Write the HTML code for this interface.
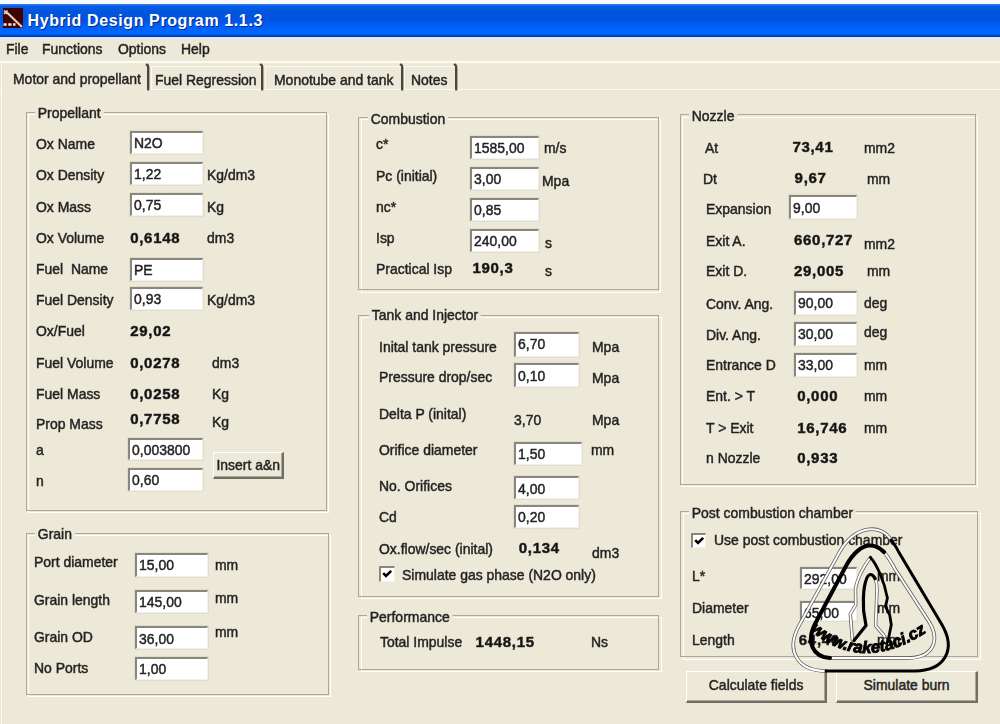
<!DOCTYPE html>
<html><head><meta charset="utf-8"><title>Hybrid Design Program</title><style>
*{margin:0;padding:0;box-sizing:border-box}
html,body{width:1000px;height:724px;overflow:hidden;background:#ECE9D8}
body{position:relative;font-family:"Liberation Sans",sans-serif;color:#1c1c1c}
#w{position:absolute;left:0;top:0;width:1000px;height:724px;filter:blur(0.5px);-webkit-text-stroke:0.5px #2a2a2a}
.t,.b{position:absolute;white-space:nowrap;font-size:15px;line-height:16px;transform-origin:0 0}
.t{transform:scaleX(.93)}
.b{font-weight:bold;font-size:15px;letter-spacing:0.7px;color:#111}
.gt{background:#ECE9D8;padding:0 3px 0 3px}
.gd,.gw{position:absolute}
.gd{border:1.4px solid #ACA899}
.gw{border:1.4px solid #FFFFFF}
.in{position:absolute;background:#fff;border-top:2px solid #8a877a;border-left:2px solid #8a877a;border-right:1.5px solid #f4f2e8;border-bottom:1.5px solid #f4f2e8;box-shadow:0 0 0 0.6px #d8d5c8}
.in span{position:absolute;left:2px;top:2.2px;font-size:15px;line-height:16px;white-space:nowrap;transform-origin:0 0;transform:scaleX(.93)}
.btn{position:absolute;background:#ECE9D8;border-top:1.5px solid #fff;border-left:1.5px solid #fff;border-right:2px solid #716F64;border-bottom:2px solid #716F64;box-shadow:inset -1px -1px 0 #ACA899}
.btn span{position:absolute;left:0;right:0;text-align:center;font-size:15px;line-height:16px;white-space:nowrap;transform:scaleX(.93)}
.cb{position:absolute;background:#fff;border-top:2px solid #8a877a;border-left:2px solid #8a877a;border-right:1.5px solid #f4f2e8;border-bottom:1.5px solid #f4f2e8}
.cb svg{position:absolute;left:-2px;top:-2px;width:15px;height:15px}
.abs{position:absolute}
</style></head><body><div id="w">
<div class="abs" style="left:0;top:0;width:1000px;height:3.5px;background:#F6FAFF"></div>
<div class="abs" style="left:0;top:3.5px;width:1000px;height:33px;background:linear-gradient(to bottom,#3C82F0 0px,#0A5EE6 2px,#0055DE 8px,#0052E2 16px,#0060F8 22px,#0068FF 30px,#0048C8 31.5px,#0034A8 33px)"></div>
<div class="abs" style="left:0;top:36.5px;width:1000px;height:2.2px;background:#E2E8F6"></div>
<div class="abs" style="left:2.5px;top:8.3px;width:20.5px;height:20px;background:#3E0404"></div>
<svg class="abs" style="left:2px;top:8px" width="22" height="21" viewBox="0 0 22 21"><path d="M5 4.5 L20 19" stroke="#F0C8B8" stroke-width="2.2"/><path d="M2 2.5 L5.5 6 M2 6 L5.5 2.5" stroke="#e0e0e0" stroke-width="1.6"/><path d="M1.5 16.5 h3.2 M6.3 16.5 h3.2 M11 16.5 h2.5" stroke="#e8e8e8" stroke-width="2.6"/></svg>
<div class="abs" style="left:27.5px;top:10.5px;font-size:16px;line-height:20px;font-weight:bold;color:#fff;white-space:nowrap;-webkit-text-stroke:0;text-shadow:1px 1px 0 #0A2A8A;letter-spacing:0.62px">Hybrid Design Program 1.1.3</div>
<div class="t" style="left:6.4px;top:41.3px">File</div>
<div class="t" style="left:42.4px;top:41.3px">Functions</div>
<div class="t" style="left:118.0px;top:41.3px">Options</div>
<div class="t" style="left:181.2px;top:41.3px">Help</div>
<div class="abs" style="left:0;top:61px;width:1000px;height:2px;background:#FBFAF3"></div>
<div class="abs" style="left:0;top:88.8px;width:1000px;height:1.5px;background:#FBFAF3"></div>
<div class="abs" style="left:0.6px;top:63px;width:1.5px;height:661px;background:#FBFAF3"></div>
<div class="abs" style="left:0.6px;top:63px;width:147px;height:27px;background:#ECE9D8;border-left:1.5px solid #FBFAF3"></div>
<div class="t" style="left:13.4px;top:70.9px">Motor and propellant</div>
<svg class="abs" style="left:145.4px;top:62px" width="7" height="30" viewBox="0 0 7 30"><path d="M1.8 2.7 C2.8 3.1 3.2 4 3.2 6 V27.4" fill="none" stroke="#4a483e" stroke-width="2.4" stroke-linecap="round"/></svg>
<svg class="abs" style="left:259.4px;top:62px" width="7" height="30" viewBox="0 0 7 30"><path d="M1.8 2.7 C2.8 3.1 3.2 4 3.2 6 V27.4" fill="none" stroke="#4a483e" stroke-width="2.4" stroke-linecap="round"/></svg>
<svg class="abs" style="left:398.6px;top:62px" width="7" height="30" viewBox="0 0 7 30"><path d="M1.8 2.7 C2.8 3.1 3.2 4 3.2 6 V27.4" fill="none" stroke="#4a483e" stroke-width="2.4" stroke-linecap="round"/></svg>
<svg class="abs" style="left:453.2px;top:62px" width="7" height="30" viewBox="0 0 7 30"><path d="M1.8 2.7 C2.8 3.1 3.2 4 3.2 6 V27.4" fill="none" stroke="#4a483e" stroke-width="2.4" stroke-linecap="round"/></svg>
<div class="abs" style="left:150.8px;top:65.5px;width:110.6px;height:23.5px;border-top:1.4px solid #FAF8EF;border-left:1.4px solid #FAF8EF"></div>
<div class="abs" style="left:265.2px;top:65.5px;width:135.4px;height:23.5px;border-top:1.4px solid #FAF8EF;border-left:1.4px solid #FAF8EF"></div>
<div class="abs" style="left:404.0px;top:65.5px;width:51.2px;height:23.5px;border-top:1.4px solid #FAF8EF;border-left:1.4px solid #FAF8EF"></div>
<div class="t" style="left:155.2px;top:72.0px">Fuel Regression</div>
<div class="t" style="left:274.2px;top:72.0px">Monotube and tank</div>
<div class="t" style="left:411.2px;top:72.0px">Notes</div>
<div class="gw" style="left:28.0px;top:114.0px;width:301.3px;height:399.1px"></div>
<div class="gd" style="left:25.8px;top:111.8px;width:301.3px;height:399.1px"></div>
<div class="t gt" style="left:35.0px;top:105.3px">Propellant</div>
<div class="t" style="left:36.0px;top:136.3px">Ox Name</div>
<div class="t" style="left:36.0px;top:167.3px">Ox Density</div>
<div class="t" style="left:36.0px;top:198.8px">Ox Mass</div>
<div class="t" style="left:36.0px;top:229.8px">Ox Volume</div>
<div class="t" style="left:36.0px;top:260.8px">Fuel&nbsp; Name</div>
<div class="t" style="left:36.0px;top:291.8px">Fuel Density</div>
<div class="t" style="left:36.0px;top:322.8px">Ox/Fuel</div>
<div class="t" style="left:36.0px;top:354.8px">Fuel Volume</div>
<div class="t" style="left:36.0px;top:385.6px">Fuel Mass</div>
<div class="t" style="left:36.0px;top:416.4px">Prop Mass</div>
<div class="t" style="left:36.0px;top:441.6px">a</div>
<div class="t" style="left:36.0px;top:472.8px">n</div>
<div class="in" style="left:130.0px;top:131.0px;width:72.5px;height:22.5px"><span>N2O</span></div>
<div class="in" style="left:130.0px;top:162.0px;width:72.5px;height:23.0px"><span>1,22</span></div>
<div class="in" style="left:130.0px;top:193.2px;width:72.5px;height:23.3px"><span>0,75</span></div>
<div class="in" style="left:130.0px;top:258.0px;width:72.5px;height:22.5px"><span>PE</span></div>
<div class="in" style="left:130.0px;top:287.0px;width:72.5px;height:22.5px"><span>0,93</span></div>
<div class="in" style="left:128.0px;top:437.5px;width:74.5px;height:22.0px"><span>0,003800</span></div>
<div class="in" style="left:128.0px;top:468.0px;width:74.5px;height:22.6px"><span>0,60</span></div>
<div class="b" style="left:130.2px;top:229.8px">0,6148</div>
<div class="b" style="left:130.2px;top:322.8px">29,02</div>
<div class="b" style="left:130.2px;top:354.8px">0,0278</div>
<div class="b" style="left:130.2px;top:385.6px">0,0258</div>
<div class="b" style="left:130.2px;top:410.8px">0,7758</div>
<div class="t" style="left:206.9px;top:167.3px">Kg/dm3</div>
<div class="t" style="left:206.9px;top:198.8px">Kg</div>
<div class="t" style="left:206.9px;top:229.8px">dm3</div>
<div class="t" style="left:206.9px;top:291.8px">Kg/dm3</div>
<div class="t" style="left:212.4px;top:354.8px">dm3</div>
<div class="t" style="left:212.4px;top:385.6px">Kg</div>
<div class="t" style="left:212.4px;top:413.6px">Kg</div>
<div class="btn" style="left:213.2px;top:452.2px;width:71.3px;height:27.3px"><span style="top:3.6px">Insert a&amp;n</span></div>
<div class="gw" style="left:28.2px;top:534.7px;width:303.1px;height:162.8px"></div>
<div class="gd" style="left:26.0px;top:532.5px;width:303.1px;height:162.8px"></div>
<div class="t gt" style="left:35.2px;top:525.8px">Grain</div>
<div class="t" style="left:33.8px;top:554.4px">Port diameter</div>
<div class="t" style="left:33.8px;top:592.2px">Grain length</div>
<div class="t" style="left:33.8px;top:629.4px">Grain OD</div>
<div class="t" style="left:33.8px;top:660.3px">No Ports</div>
<div class="in" style="left:134.8px;top:553.0px;width:73.2px;height:24.4px"><span>15,00</span></div>
<div class="in" style="left:134.8px;top:590.0px;width:73.2px;height:23.0px"><span>145,00</span></div>
<div class="in" style="left:134.8px;top:626.4px;width:73.2px;height:23.0px"><span>36,00</span></div>
<div class="in" style="left:134.8px;top:657.0px;width:73.2px;height:23.2px"><span>1,00</span></div>
<div class="t" style="left:215.2px;top:556.6px">mm</div>
<div class="t" style="left:215.2px;top:590.2px">mm</div>
<div class="t" style="left:215.2px;top:623.8px">mm</div>
<div class="gw" style="left:360.6px;top:118.9px;width:300.9px;height:173.7px"></div>
<div class="gd" style="left:358.4px;top:116.7px;width:300.9px;height:173.7px"></div>
<div class="t gt" style="left:367.8px;top:110.8px">Combustion</div>
<div class="t" style="left:376.4px;top:136.4px">c*</div>
<div class="t" style="left:376.4px;top:168.4px">Pc (initial)</div>
<div class="t" style="left:376.4px;top:198.8px">nc*</div>
<div class="t" style="left:376.4px;top:230.2px">Isp</div>
<div class="t" style="left:376.4px;top:261.2px">Practical Isp</div>
<div class="in" style="left:470.0px;top:135.8px;width:68.8px;height:23.4px"><span>1585,00</span></div>
<div class="in" style="left:470.0px;top:166.6px;width:68.8px;height:23.0px"><span>3,00</span></div>
<div class="in" style="left:470.0px;top:197.6px;width:68.8px;height:23.4px"><span>0,85</span></div>
<div class="in" style="left:470.0px;top:229.0px;width:68.8px;height:23.0px"><span>240,00</span></div>
<div class="t" style="left:544.4px;top:139.6px">m/s</div>
<div class="t" style="left:542.2px;top:173.2px">Mpa</div>
<div class="t" style="left:545.0px;top:234.6px">s</div>
<div class="t" style="left:545.0px;top:262.8px">s</div>
<div class="b" style="left:472.4px;top:259.6px">190,3</div>
<div class="gw" style="left:360.6px;top:316.7px;width:301.0px;height:282.2px"></div>
<div class="gd" style="left:358.4px;top:314.5px;width:301.0px;height:282.2px"></div>
<div class="t gt" style="left:368.6px;top:307.4px">Tank and Injector</div>
<div class="t" style="left:378.6px;top:338.6px">Inital tank pressure</div>
<div class="t" style="left:378.6px;top:369.4px">Pressure drop/sec</div>
<div class="t" style="left:378.6px;top:405.8px">Delta P (inital)</div>
<div class="t" style="left:378.6px;top:442.4px">Orifice diameter</div>
<div class="t" style="left:378.6px;top:478.2px">No. Orifices</div>
<div class="t" style="left:378.6px;top:509.0px">Cd</div>
<div class="t" style="left:378.6px;top:540.8px">Ox.flow/sec (inital)</div>
<div class="in" style="left:513.8px;top:332.0px;width:65.0px;height:25.0px"><span>6,70</span></div>
<div class="in" style="left:513.8px;top:363.4px;width:65.0px;height:23.6px"><span>0,10</span></div>
<div class="in" style="left:513.8px;top:442.0px;width:68.2px;height:23.2px"><span>1,50</span></div>
<div class="in" style="left:513.8px;top:476.4px;width:65.0px;height:22.4px"><span>4,00</span></div>
<div class="in" style="left:513.8px;top:505.2px;width:65.0px;height:22.4px"><span>0,20</span></div>
<div class="t" style="left:514.0px;top:411.6px">3,70</div>
<div class="t" style="left:591.8px;top:338.6px">Mpa</div>
<div class="t" style="left:591.8px;top:370.0px">Mpa</div>
<div class="t" style="left:591.8px;top:411.6px">Mpa</div>
<div class="t" style="left:590.8px;top:442.4px">mm</div>
<div class="t" style="left:591.8px;top:545.4px">dm3</div>
<div class="b" style="left:518.8px;top:540.0px">0,134</div>
<div class="cb" style="left:379.4px;top:566.0px;width:15.4px;height:16.0px"><svg width="100%" height="100%" viewBox="0 0 15 15"><path d="M4.2 7.2 L7 10 L12.2 4.8" fill="none" stroke="#000" stroke-width="2.6"/></svg></div>
<div class="t" style="left:402.0px;top:567.2px">Simulate gas phase (N2O only)</div>
<div class="gw" style="left:360.6px;top:617.4px;width:301.0px;height:55.0px"></div>
<div class="gd" style="left:358.4px;top:615.2px;width:301.0px;height:55.0px"></div>
<div class="t gt" style="left:366.8px;top:608.8px">Performance</div>
<div class="t" style="left:379.6px;top:634.4px">Total Impulse</div>
<div class="b" style="left:475.6px;top:634.4px">1448,15</div>
<div class="t" style="left:591.4px;top:634.4px">Ns</div>
<div class="gw" style="left:682.3px;top:116.5px;width:295.8px;height:370.5px"></div>
<div class="gd" style="left:680.1px;top:114.3px;width:295.8px;height:370.5px"></div>
<div class="t gt" style="left:689.4px;top:107.6px">Nozzle</div>
<div class="t" style="left:705.0px;top:139.6px">At</div>
<div class="t" style="left:702.8px;top:170.6px">Dt</div>
<div class="t" style="left:706.0px;top:201.4px">Expansion</div>
<div class="t" style="left:706.0px;top:233.4px">Exit A.</div>
<div class="t" style="left:706.0px;top:263.4px">Exit D.</div>
<div class="t" style="left:706.0px;top:295.6px">Conv. Ang.</div>
<div class="t" style="left:706.0px;top:327.0px">Div. Ang.</div>
<div class="t" style="left:706.0px;top:357.0px">Entrance D</div>
<div class="t" style="left:706.0px;top:388.4px">Ent. &gt; T</div>
<div class="t" style="left:706.0px;top:419.8px">T &gt; Exit</div>
<div class="t" style="left:706.0px;top:449.8px">n Nozzle</div>
<div class="b" style="left:792.4px;top:139.0px">73,41</div>
<div class="b" style="left:794.6px;top:170.0px">9,67</div>
<div class="b" style="left:794.0px;top:232.4px">660,727</div>
<div class="b" style="left:794.0px;top:262.8px">29,005</div>
<div class="b" style="left:797.2px;top:388.4px">0,000</div>
<div class="b" style="left:797.2px;top:419.8px">16,746</div>
<div class="b" style="left:797.2px;top:449.8px">0,933</div>
<div class="in" style="left:789.0px;top:195.4px;width:68.2px;height:23.6px"><span>9,00</span></div>
<div class="in" style="left:794.2px;top:291.2px;width:63.0px;height:23.4px"><span>90,00</span></div>
<div class="in" style="left:794.2px;top:322.2px;width:63.0px;height:23.4px"><span>30,00</span></div>
<div class="in" style="left:794.2px;top:353.0px;width:63.0px;height:23.6px"><span>33,00</span></div>
<div class="t" style="left:864.4px;top:139.6px">mm2</div>
<div class="t" style="left:867.0px;top:170.6px">mm</div>
<div class="t" style="left:864.4px;top:235.6px">mm2</div>
<div class="t" style="left:867.0px;top:263.4px">mm</div>
<div class="t" style="left:864.4px;top:295.0px">deg</div>
<div class="t" style="left:864.4px;top:323.8px">deg</div>
<div class="t" style="left:864.4px;top:357.0px">mm</div>
<div class="t" style="left:864.4px;top:388.4px">mm</div>
<div class="t" style="left:864.4px;top:419.8px">mm</div>
<div class="gw" style="left:682.5px;top:513.3px;width:298.1px;height:146.3px"></div>
<div class="gd" style="left:680.3px;top:511.1px;width:298.1px;height:146.3px"></div>
<div class="t gt" style="left:689.4px;top:504.8px">Post combustion chamber</div>
<div class="cb" style="left:690.8px;top:533.4px;width:15.0px;height:14.4px"><svg width="100%" height="100%" viewBox="0 0 15 15"><path d="M4.2 7.2 L7 10 L12.2 4.8" fill="none" stroke="#000" stroke-width="2.6"/></svg></div>
<div class="t" style="left:714.0px;top:532.4px">Use post combustion chamber</div>
<div class="t" style="left:692.2px;top:568.2px">L*</div>
<div class="t" style="left:692.2px;top:600.2px">Diameter</div>
<div class="t" style="left:692.2px;top:631.6px">Length</div>
<div class="in" style="left:799.6px;top:567.0px;width:57.4px;height:22.4px"><span>292,00</span></div>
<div class="in" style="left:799.6px;top:600.6px;width:57.4px;height:20.8px"><span>65,00</span></div>
<div class="b" style="left:798.8px;top:631.6px">64,40</div>
<div class="t" style="left:877.2px;top:568.2px">mm</div>
<div class="t" style="left:877.2px;top:600.2px">mm</div>
<div class="t" style="left:877.2px;top:631.6px">mm</div>
<div class="btn" style="left:685.7px;top:670.6px;width:141.2px;height:32.4px"><span style="top:5.6px">Calculate fields</span></div>
<div class="btn" style="left:835.8px;top:670.6px;width:142.2px;height:32.4px"><span style="top:5.6px">Simulate burn</span></div>
<svg class="abs" style="left:770px;top:515px" width="195" height="170" viewBox="770 515 195 170">
<g fill="none" stroke-linecap="round" stroke-linejoin="round">
<!-- A white band parts -->
<path d="M799.1 625.5 L839.0 553.0 M839.0 553.0 C855.0 524.1 881.8 523.7 891 540 M826.0 671.0 C797.4 671.0 785.3 650.5 799.1 625.5" stroke="#5a5a5a" stroke-width="3.6"/>
<path d="M799.1 625.5 L839.0 553.0 M839.0 553.0 C855.0 524.1 881.8 523.7 891 540 M826.0 671.0 C797.4 671.0 785.3 650.5 799.1 625.5" stroke="#fff" stroke-width="2"/>
<!-- A black parts -->
<path d="M891 540 C894 544 896 546 898.7 552.0 L941.4 623.8 C956.9 649.7 944.9 671.0 914.6 671.0 L826.0 671.0" stroke="#000" stroke-width="3"/>
<!-- B white band parts -->
<path d="M883 551 C888 556 891 562 894.8 568.7 L928.1 620.2 C941.6 641.0 932.4 658.0 907.6 658.0 L830 658.0" stroke="#5a5a5a" stroke-width="3.6"/>
<path d="M883 551 C888 556 891 562 894.8 568.7 L928.1 620.2 C941.6 641.0 932.4 658.0 907.6 658.0 L830 658.0" stroke="#fff" stroke-width="2"/>
<!-- B black parts -->
<path d="M830 658 C814 657 804 643 816.7 620.7 L846 566 C853 553 862 545.5 870 545.5 C876 545.5 880 548 884 552" stroke="#000" stroke-width="4"/>
<!-- rocket white band -->
<path d="M870.4 557.4 C864 566 858 576 855.5 588 L855.7 605 L850.3 614 L852.4 640 M874.5 577.5 C876.5 581 877 585 877 590 L875.6 625.6 L884.7 636.4" stroke="#5a5a5a" stroke-width="3.4"/>
<path d="M870.4 557.4 C864 566 858 576 855.5 588 L855.7 605 L850.3 614 L852.4 640 M874.5 577.5 C876.5 581 877 585 877 590 L875.6 625.6 L884.7 636.4" stroke="#fff" stroke-width="1.9"/>
<!-- rocket black -->
<path d="M870.4 557.4 C876 563 884 580 887.4 598 L885.5 606.6 L889.7 614.9 L891.3 624.8 L888 641" stroke="#000" stroke-width="2.8"/>
<path d="M875 578.5 C873.5 575.5 872 574.5 870.5 574.5 C866 575 863.5 587 863.4 600 L863.6 610.7 L866 625.6 L854 640.5" stroke="#000" stroke-width="3.2"/>
</g>
<path id="wmarc" d="M810 630 Q866 679 938 624" fill="none"/>
<text style="-webkit-text-stroke:0" font-family="Liberation Sans" font-weight="bold" font-style="italic" font-size="16.5" fill="#000" stroke="#000" stroke-width="0.9" letter-spacing="0"><textPath href="#wmarc">www.raketaci.cz</textPath></text>
</svg>
</div></body></html>
